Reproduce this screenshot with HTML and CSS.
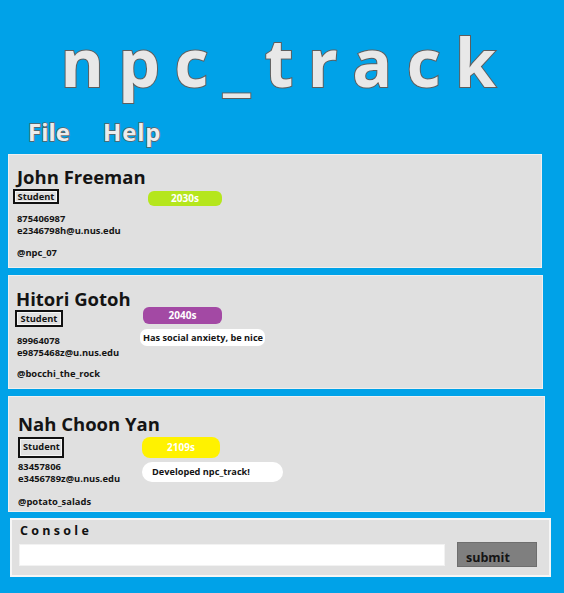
FILE: index.html
```html
<!DOCTYPE html>
<html>
<head>
<meta charset="utf-8">
<link rel="stylesheet" href="styles.css">
</head>
<body>
<h1 class="title">npc_track</h1>
<nav class="menu">
  <span class="menu-item menu-file">File</span>
  <span class="menu-item menu-help">Help</span>
</nav>
<main class="list">
  <section class="card card-1">
    <div class="name">John Freeman</div>
    <div class="body">
      <div class="left">
        <span class="badge">Student</span>
        <div class="contact">
          <div>875406987</div>
          <div>e2346798h@u.nus.edu</div>
        </div>
        <div class="handle">@npc_07</div>
      </div>
      <div class="right">
        <span class="tag tag-lime">2030s</span>
      </div>
    </div>
  </section>
  <section class="card card-2">
    <div class="name">Hitori Gotoh</div>
    <div class="body">
      <div class="left">
        <span class="badge">Student</span>
        <div class="contact">
          <div>89964078</div>
          <div>e9875468z@u.nus.edu</div>
        </div>
        <div class="handle">@bocchi_the_rock</div>
      </div>
      <div class="right">
        <span class="tag tag-purple">2040s</span>
        <span class="note">Has social anxiety, be nice</span>
      </div>
    </div>
  </section>
  <section class="card card-3">
    <div class="name">Nah Choon Yan</div>
    <div class="body">
      <div class="left">
        <span class="badge">Student</span>
        <div class="contact">
          <div>83457806</div>
          <div>e3456789z@u.nus.edu</div>
        </div>
        <div class="handle">@potato_salads</div>
      </div>
      <div class="right">
        <span class="tag tag-yellow">2109s</span>
        <span class="note">Developed npc_track!</span>
      </div>
    </div>
  </section>
</main>
<section class="console">
  <div class="console-label">Console</div>
  <div class="console-row">
    <input class="console-input" type="text">
    <button class="console-submit">submit</button>
  </div>
</section>
</body>
</html>
```
FILE: styles.css
```css
* { box-sizing: border-box; }
html, body { margin: 0; padding: 0; }
body {
  background: #00a2e8;
  font-family: "Open Sans", "Noto Sans", sans-serif;
  width: 564px;
  height: 593px;
  overflow: hidden;
}
.title {
  margin: 0;
  padding-top: 28px;
  padding-left: 7px;
  text-align: center;
  font-size: 66px;
  line-height: 66px;
  font-weight: 700;
  letter-spacing: 14.5px;
  color: #e8e8e8;
  -webkit-text-stroke: 2px #5e5e5e;
  paint-order: stroke fill;
}
.menu {
  display: flex;
  margin-top: 23px;
  height: 30px;
}
.menu-item {
  font-size: 24px;
  line-height: 30px;
  font-weight: 700;
  color: #ececec;
  -webkit-text-stroke: 1.5px #5e5e5e;
  paint-order: stroke fill;
}
.menu-file { margin-left: 28px; }
.menu-help { margin-left: 33px; letter-spacing: 0.8px; }

.list {
  margin-top: 7px;
  padding-left: 8px;
  display: flex;
  flex-direction: column;
  gap: 7px;
}
.card {
  height: 114px;
  background: #e0e0e0;
  border: 1px solid #efefef;
  padding-left: 8px;
  color: #141414;
}
.card-1 { width: 534px; padding-top: 11px; }
.card-2 { width: 535px; padding-top: 12px; }
.card-3 { width: 537px; height: 116px; padding-top: 16px; }

.name {
  font-size: 18.5px;
  line-height: 22px;
  font-weight: 700;
}
.card-2 .name { margin-left: -1px; }
.card-3 .name { margin-left: 1px; }

.body { display: flex; }
.left {
  width: 120px;
  display: flex;
  flex-direction: column;
  align-items: flex-start;
}
.badge {
  border: 2px solid #111;
  box-shadow: inset 0 0 0 1px #f6f6f6;
  font-size: 9.3px;
  font-weight: 700;
  text-align: center;
}
.card-1 .badge { margin: 1px 0 0 -4px; width: 46px; height: 15px; line-height: 11px; }
.card-2 .badge { margin: 0 0 0 -2px; width: 48px; height: 17px; line-height: 13px; }
.card-3 .badge { margin: 2px 0 0 1px; width: 46px; height: 21px; line-height: 16px; text-align: left; padding-left: 3px; }

.contact, .handle {
  font-size: 9.4px;
  line-height: 12px;
  font-weight: 700;
}
.card-1 .contact { margin-top: 9px; }
.card-1 .handle { margin-top: 10px; }
.card-2 .contact { margin-top: 8px; }
.card-2 .handle { margin-top: 9px; }
.card-3 .contact { margin-top: 3px; margin-left: 1px; }
.card-3 .handle { margin-top: 11px; margin-left: 1px; }

.right {
  display: flex;
  flex-direction: column;
  align-items: flex-start;
}
.tag {
  color: #fff;
  font-size: 10px;
  font-weight: 700;
  text-align: center;
}
.card-1 .tag { margin: 3px 0 0 11px; width: 74px; height: 15px; line-height: 15px; border-radius: 6px; }
.card-2 .tag { margin: -3px 0 0 6px; width: 79px; height: 17px; line-height: 17px; border-radius: 6px; }
.card-3 .tag { margin: 2px 0 0 5px; width: 78px; height: 21px; line-height: 21px; border-radius: 8px; }
.tag-lime { background: #b5e61d; }
.tag-purple { background: #a349a4; }
.tag-yellow { background: #fff200; }

.note {
  background: #fff;
  font-size: 9.2px;
  font-weight: 700;
  color: #141414;
}
.card-2 .note { margin: 5px 0 0 3px; width: 125px; height: 17px; line-height: 17px; border-radius: 7px; padding-left: 3px; }
.card-3 .note { margin: 4px 0 0 5px; width: 141px; height: 20px; line-height: 20px; border-radius: 10px; padding-left: 10px; }

.console {
  margin: 6px 0 0 10px;
  width: 541px;
  height: 59px;
  background: #e0e0e0;
  border: 2px solid #f6f6f6;
  padding: 3px 0 0 7px;
}
.console-label {
  font-size: 12.5px;
  line-height: 16px;
  font-weight: 700;
  letter-spacing: 3.3px;
  color: #111;
  padding-left: 1px;
}
.console-row {
  display: flex;
  align-items: flex-start;
}
.console-input {
  margin-top: 5px;
  width: 426px;
  height: 22px;
  border: 1px solid #f2f2f2;
  background: #fff;
  padding: 0;
  outline: none;
}
.console-submit {
  margin: 3px 0 0 12px;
  width: 80px;
  height: 25px;
  background: #7f7f7f;
  border: 1px solid #6e6e6e;
  font-family: "Open Sans", "Noto Sans", sans-serif;
  font-size: 12.5px;
  line-height: 14px;
  font-weight: 700;
  color: #141414;
  text-align: left;
  padding: 7px 0 0 8px;
}
```
